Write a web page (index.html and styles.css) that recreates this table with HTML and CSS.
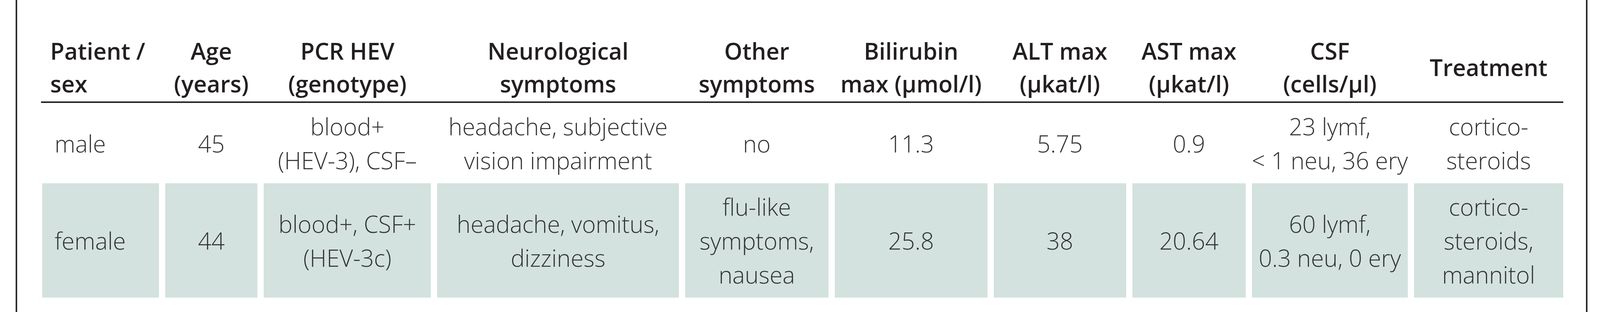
FILE: index.html
```html
<!DOCTYPE html>
<html lang="en">
<head>
<meta charset="utf-8">
<title>HEV patients</title>
<link rel="stylesheet" href="styles.css">
</head>
<body>
<div class="frame">
  <div class="grid" role="table">
    <div class="th first" role="columnheader">Patient /<br>sex</div>
    <div class="th" role="columnheader">Age<br>(years)</div>
    <div class="th" role="columnheader">PCR HEV<br>(genotype)</div>
    <div class="th" role="columnheader">Neurological<br>symptoms</div>
    <div class="th" role="columnheader">Other<br>symptoms</div>
    <div class="th" role="columnheader">Bilirubin<br>max (µmol/l)</div>
    <div class="th" role="columnheader">ALT max<br>(µkat/l)</div>
    <div class="th" role="columnheader">AST max<br>(µkat/l)</div>
    <div class="th" role="columnheader">CSF<br>(cells/µl)</div>
    <div class="th" role="columnheader">Treatment</div>
    <div class="rule"></div>

    <div class="td first" role="cell">male</div>
    <div class="td" role="cell">45</div>
    <div class="td" role="cell">blood+<br>(HEV-3), CSF–</div>
    <div class="td" role="cell">headache, subjective<br>vision impairment</div>
    <div class="td" role="cell">no</div>
    <div class="td" role="cell">11.3</div>
    <div class="td" role="cell">5.75</div>
    <div class="td" role="cell">0.9</div>
    <div class="td" role="cell">23 lymf,<br>&lt; 1 neu, 36 ery</div>
    <div class="td" role="cell">cortico-<br>steroids</div>

    <div class="td first shade" role="cell">female</div>
    <div class="td shade" role="cell">44</div>
    <div class="td shade" role="cell">blood+, CSF+<br>(HEV-3c)</div>
    <div class="td shade" role="cell">headache, vomitus,<br>dizziness</div>
    <div class="td shade" role="cell">flu-like<br>symptoms,<br>nausea</div>
    <div class="td shade" role="cell">25.8</div>
    <div class="td shade" role="cell">38</div>
    <div class="td shade" role="cell">20.64</div>
    <div class="td shade" role="cell">60 lymf,<br>0.3 neu, 0 ery</div>
    <div class="td shade" role="cell">cortico-<br>steroids,<br>mannitol</div>
  </div>
</div>
</body>
</html>
```

FILE: styles.css
```css
:root {
  --u: calc(100vw / 4344);
}

html, body {
  margin: 0;
  padding: 0;
  background: #ffffff;
  overflow: hidden;
}

.frame {
  box-sizing: border-box;
  margin-left: calc(var(--u) * 42);
  width: calc(var(--u) * 4268);
  height: 800px;
  border-left: 4px solid #2b2b2b;
  border-right: 4px solid #2b2b2b;
  padding: 86px 0 0 calc(var(--u) * 68);
  font-family: "Open Sans", "Noto Sans", sans-serif;
  font-size: 60px;
}

.grid {
  display: grid;
  grid-template-columns:
    calc(var(--u) * 317) calc(var(--u) * 251) calc(var(--u) * 454)
    calc(var(--u) * 656) calc(var(--u) * 389) calc(var(--u) * 415)
    calc(var(--u) * 359) calc(var(--u) * 308) calc(var(--u) * 423)
    calc(var(--u) * 405);
  column-gap: calc(var(--u) * 17);
  row-gap: 0;
}

.th,
.td {
  display: flex;
  align-items: center;
  justify-content: center;
  text-align: center;
  white-space: nowrap;
}

.th {
  font-size: 59px;
  font-weight: 600;
  color: #231f20;
  line-height: 84px;
  padding: 2px 0 4px;
  height: 168px;
}

.th.first {
  justify-content: flex-start;
  text-align: left;
  padding-left: calc(var(--u) * 22);
}

.rule {
  grid-column: 1 / -1;
  height: 4px;
  background: #262626;
  margin-left: calc(var(--u) * -3);
}

.td {
  font-weight: 300;
  color: #333333;
  line-height: 87px;
  padding: 17px 0 15px;
}

.td.first {
  justify-content: flex-start;
  text-align: left;
  padding-left: calc(var(--u) * 34);
}

.shade {
  background: #d3e2de;
}
```
